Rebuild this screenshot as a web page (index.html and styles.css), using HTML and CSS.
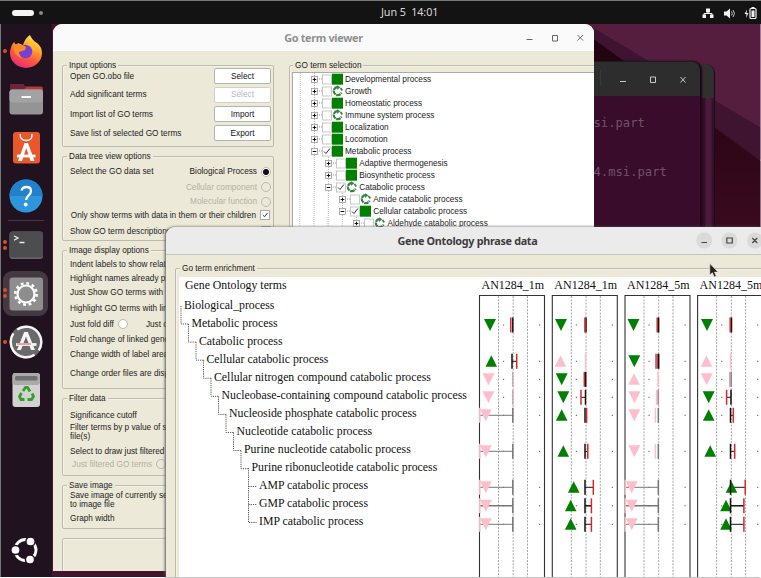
FILE: index.html
```html
<!DOCTYPE html>
<html lang="en">
<head>
<meta charset="utf-8">
<title>Gene Ontology phrase data</title>
<link rel="stylesheet" href="styles.css">
</head>
<body>
<svg class="wallpaper" viewBox="0 0 761 578">
  <defs><linearGradient id="shade" x1="0" y1="0" x2="0" y2="1"><stop offset="0" stop-color="#20030f"/><stop offset="1" stop-color="#3b0a1e"/></linearGradient></defs>
  <rect width="761" height="578" fill="#43142f"/>
  <path d="M590 26L761 128V24H590z" fill="#551e3e"/>
  <path d="M590 26L761 128V160L590 51z" fill="#3e1430"/>
  <path d="M590 36L761 161V240H590z" fill="url(#shade)"/>
</svg>

<header class="topbar">
  <div class="spaces"><i class="pill"></i><i class="dot"></i></div>
  <span class="clock">Jun 5&nbsp; 14:01</span>
  <svg class="tray" viewBox="700 4 58 16" fill="#f2f2f2">
    <path d="M706 7.500h4v4h-4zM702.500 13.500h3.500v3.500h-3.500zM710 13.500h3.500v3.500H710z"/><path d="M708 11v1.500M704 14v-1.500h8V14" fill="none" stroke="#f2f2f2"/>
    <path d="M724 10.500h2.500l3.500-3v10l-3.500-3H724z"/><path d="M731.500 10.500q1.500 2 0 4M733 9q3 3.500 0 7" fill="none" stroke="#ddd" stroke-width=".9"/>
    <path d="M747 8.500l-2.500 4.500h2l-.5 4 2.500-5h-2z"/><rect x="750" y="7.500" width="6" height="10" rx="1" fill="none" stroke="#f2f2f2" stroke-width="1.200"/><path d="M751.500 6h3v2h-3zM751.500 9.500h3v6.500h-3z"/>
  </svg>
</header>

<nav class="dock">
  <div class="slot one"><svg viewBox="0 0 34 34">
    <defs><linearGradient id="fox" x1=".8" y1="0" x2=".3" y2="1"><stop offset="0" stop-color="#fff44f"/><stop offset=".35" stop-color="#ffa72c"/><stop offset=".65" stop-color="#ff5a3c"/><stop offset="1" stop-color="#e62a78"/></linearGradient></defs>
    <path d="M21 1q2 5 7 8 5 4 5 10a16 15 0 0 1-32 0Q1 13 5 8l2 3 2-2 5 2q2-7 7-10z" fill="url(#fox)"/>
    <circle cx="16.500" cy="17.500" r="6.800" fill="#7540d6"/><path d="M4 11q6-3 13 2l-1 3-6 2q0 4 4 6-7-1-9-7z" fill="#ff8a25"/><path d="M18 11q6 0 7 7 2-6-3-10z" fill="#ffc02e"/></svg></div>
  <div class="slot"><svg viewBox="0 0 34 34">
    <path d="M1 4q0-2 2-2h11l2 2.500h16q2 0 2 2V14H1z" fill="#b43a35"/><path d="M1 4q0-2 2-2h11l2 2.500H18L14 8H1z" fill="#6c2439"/>
    <rect x=".5" y="7.500" width="33.500" height="25" rx="3" fill="#949494"/><rect x=".5" y="7.500" width="33.500" height="13" rx="3" fill="#a2a2a2"/><path d="M12.500 15h9.500" stroke="#fff" stroke-width="2"/></svg></div>
  <div class="slot"><svg viewBox="0 0 34 34">
    <rect x="4" y="1" width="27" height="31.500" rx="3" fill="#e9572b"/><path d="M11 3q0 6.500 6.200 6.500T23 3" fill="none" stroke="#fff" stroke-width="1.400"/>
    <path d="M15.500 12h3.500l6.500 18h-4l-4.200-13L13 30H9z" fill="#fff"/><path d="M8 25h18.500" stroke="#fff" stroke-width="2.800"/></svg></div>
  <div class="slot"><svg viewBox="0 0 34 34">
    <circle cx="17" cy="17" r="16.500" fill="#3096dc"/><path d="M.5 17a16.500 16.500 0 0 1 33 0z" fill="#2182cb"/><path d="M12.500 11.500q1-3.500 5-3.500 4.500 0 4.500 4 0 2-2.500 4.500T17 21" fill="none" stroke="#fff" stroke-width="2.300"/><circle cx="16.700" cy="25.500" r="1.900" fill="#fff"/></svg></div>
  <hr>
  <div class="slot two"><svg viewBox="0 0 34 34">
    <rect x=".5" y="3.500" width="33.500" height="27.500" rx="3" fill="#686868"/><rect x=".5" y="3.500" width="33.500" height="26" rx="3" fill="#4b4d4e"/><path d="M5 8l4 2-4 2.300M10.500 14.500h5" fill="none" stroke="#eee" stroke-width="1.300"/></svg></div>
  <div class="slot two active"><svg viewBox="0 0 34 34">
    <rect x=".5" y=".5" width="33.500" height="33" rx="3" fill="#8e8e8e"/><circle cx="17" cy="17" r="10.700" fill="none" stroke="#fff" stroke-width="2.600" stroke-dasharray="2.800 2.802"/><circle cx="17" cy="17" r="8.500" fill="none" stroke="#fff" stroke-width="2.200"/></svg></div>
  <div class="slot one"><svg viewBox="0 0 34 34">
    <circle cx="17" cy="17" r="16.500" fill="#6a6a6a"/><circle cx="17" cy="17" r="15.300" fill="none" stroke="#f5f5f5" stroke-width="2.400" stroke-dasharray="42 6.070" transform="rotate(-125 17 17)"/>
    <path d="M15.200 7h3.600L26 25h-4l-5-13.500L12 25H8z" fill="#f5f5f5"/><path d="M7 19.500h20.500" stroke="#f5f5f5" stroke-width="2.800"/><path d="M8 19h14" stroke="#d95a4a"/></svg></div>
  <div class="slot"><svg viewBox="0 0 34 34">
    <rect x="3.500" y="0" width="27.500" height="34" rx="3" fill="#d2d2d2"/><rect x="3.500" y="0" width="27.500" height="12" rx="3" fill="#aaa"/><rect x="6" y="3" width="22.500" height="4.500" rx="1.500" fill="#717171"/>
    <g fill="none" stroke="#34a02c" stroke-width="2.800"><path d="M14 18l2.500-3.500h2l2.500 4"/><path d="M23 20.500l1.500 3-2 3H18.500"/><path d="M15.500 26.500H12l-1.500-3 2-3.500"/></g></svg></div>
  <div class="slot launcher"><svg viewBox="0 0 34 34">
    <circle cx="17.500" cy="17" r="10.500" fill="none" stroke="#fff" stroke-width="2.800"/><g fill="#fff" stroke="#20121f" stroke-width="1.500"><circle cx="7.500" cy="17" r="4.600"/><circle cx="22.500" cy="8.500" r="4.600"/><circle cx="22" cy="26.500" r="4.600"/></g></svg></div>
</nav>

<section class="term term-back"><div class="term-bar"></div></section>
<section class="term term-front">
  <div class="term-bar"><svg viewBox="600 61 100 35" fill="none" stroke="#c8c8c8"><path d="M600 69v16" stroke="#444"/><path d="M620 80.500h6M650.500 76h5v5.500h-5zM680.500 76l5 5.500M685.500 76l-5 5.500"/></svg></div>
  <p>si.part</p><p>4.msi.part</p>
</section>

<main class="window viewer">
  <div class="titlebar"><h1>Go term viewer</h1>
    <svg viewBox="524 24 70 27" fill="none" stroke="#666"><path d="M526.500 39.500h6M552.500 35.500h5v5.500h-5zM577.500 35l5.500 5.500M583 35l-5.500 5.500"/></svg></div>
  <div class="body">
    <div class="options">
      <fieldset class="box input"><legend>Input options</legend>
        <div class="row"><span>Open GO.obo file</span><button>Select</button></div>
        <div class="row"><span>Add significant terms</span><button disabled>Select</button></div>
        <div class="row"><span>Import list of GO terms</span><button>Import</button></div>
        <div class="row"><span>Save list of selected GO terms</span><button>Export</button></div>
      </fieldset>
      <fieldset class="box data"><legend>Data tree view options</legend>
        <div class="row"><span>Select the GO data set</span><label>Biological Process<i class="radio on"></i></label></div>
        <div class="row end off"><label>Cellular component<i class="radio"></i></label></div>
        <div class="row end off"><label>Molecular function<i class="radio"></i></label></div>
        <div class="row end"><label>Only show terms with data in them or their children<svg class="check" viewBox="0 0 9 9"><path d="M2 4.500l2 2 3.500-4.500"/></svg></label></div>
        <div class="row"><span>Show GO term descriptions</span><svg class="check" viewBox="0 0 9 9"></svg></div>
      </fieldset>
      <fieldset class="box image"><legend>Image display options</legend>
        <div class="row"><span>Indent labels to show relation</span></div>
        <div class="row"><span>Highlight names already pre</span></div>
        <div class="row"><span>Just Show GO terms with</span></div>
        <div class="row"><span>Highlight GO terms with link</span></div>
        <div class="row fold"><span>Just fold diff</span><i class="radio"></i><span class="second">Just c</span></div>
        <div class="row"><span>Fold change of linked genes</span></div>
        <div class="row"><span>Change width of label area</span></div>
        <div class="row"><span>Change order files are displ</span></div>
      </fieldset>
      <fieldset class="box filter"><legend>Filter data</legend>
        <div class="row"><span>Significance cutoff</span></div>
        <div class="row"><span>Filter terms by p value of se<br>file(s)</span></div>
        <div class="row"><span>Select to draw just filtered g</span></div>
        <div class="row off just"><span>Just filtered GO terms</span><i class="radio"></i></div>
      </fieldset>
      <fieldset class="box save"><legend>Save image</legend>
        <div class="row"><span>Save image of currently sel<br>to image file</span></div>
        <div class="row"><span>Graph width</span></div>
      </fieldset>
      <div class="box rest"></div>
    </div>
    <fieldset class="box selection"><legend>GO term selection</legend>
      <ul class="tree">
        <li class="l1 shut sq">Developmental process</li>
        <li class="l1 shut cy">Growth</li>
        <li class="l1 shut sq">Homeostatic process</li>
        <li class="l1 shut cy">Immune system process</li>
        <li class="l1 shut sq">Localization</li>
        <li class="l1 shut sq">Locomotion</li>
        <li class="l1 open sq">Metabolic process</li>
        <li class="l2 shut sq">Adaptive thermogenesis</li>
        <li class="l2 shut sq">Biosynthetic process</li>
        <li class="l2 open cy">Catabolic process</li>
        <li class="l3 shut cy">Amide catabolic process</li>
        <li class="l3 open sq">Cellular catabolic process</li>
        <li class="l4 shut cy">Aldehyde catabolic process</li>
      </ul>
    </fieldset>
  </div>
</main>

<section class="window phrase">
  <div class="titlebar"><h1>Gene Ontology phrase data</h1>
    <svg viewBox="691 227 70 27" fill="none" stroke="#444"><g fill="#dadada" stroke="none"><circle cx="704.200" cy="240.500" r="8"/><circle cx="729.500" cy="240.500" r="8"/><circle cx="755" cy="240.500" r="8"/></g><path d="M701.500 242.500h5.500M726.800 238h5.500v5h-5.500zM752.300 238l5 5M757.300 238l-5 5" stroke-width="1.200"/></svg></div>
  <fieldset class="box enrich"><legend>Go term enrichment</legend>
    <div class="paper">
      <div class="terms">
        <h2>Gene Ontology terms</h2>
        <ol>
          <li>Biological_process</li><li>Metabolic process</li><li>Catabolic process</li><li>Cellular catabolic process</li><li>Cellular nitrogen compound catabolic process</li><li>Nucleobase-containing compound catabolic process</li><li>Nucleoside phosphate catabolic process</li><li>Nucleotide catabolic process</li><li>Purine nucleotide catabolic process</li><li>Purine ribonucleotide catabolic process</li><li>AMP catabolic process</li><li>GMP catabolic process</li><li>IMP catabolic process</li>
        </ol>
      </div>
      <svg class="chart" viewBox="478 277 283 300"></svg>
    </div>
  </fieldset>
</section>
<svg class="pointer" viewBox="0 0 10 15"><path d="M.8.500v11.500l2.600-2.300L5.200 14l2-.9-1.700-4h3.600z" fill="#222" stroke="#eee" stroke-width=".6"/></svg>
<script src="chart.js"></script>
</body>
</html>
```
FILE: styles.css
```css
* { box-sizing: border-box; }
html, body { margin: 0; width: 761px; height: 578px; overflow: hidden; }
body { position: relative; font-family: "Liberation Sans", sans-serif; font-size: 8.250px; line-height: 9px; color: #1c1c1c; background: #fff; white-space: nowrap; }
svg { display: block; flex: none; }
p, h1, h2, ul, ol { margin: 0; padding: 0; list-style: none; }
.wallpaper { position: absolute; left: 0; top: 0; width: 761px; height: 577px; }

.topbar { position: absolute; left: 0; top: 0; width: 761px; height: 24px; background: #131313; border-top: 1px solid #777; display: grid; grid-template-columns: 369px 60px 1fr; align-items: center; padding: 0 3px 0 12px; }
.spaces { display: flex; align-items: center; gap: 5px; }
.pill { width: 22px; height: 6px; border-radius: 3px; background: #f4f4f4; }
.dot { width: 4px; height: 4px; border-radius: 50%; background: #888; }
.clock { font: 10.800px/16px "Noto Sans", sans-serif; letter-spacing: -.1px; color: #d8d8d8; padding-bottom: 1px; }
.tray { width: 58px; height: 16px; justify-self: end; }

.dock { position: absolute; left: 0; top: 24px; width: 53px; height: 553px; background: #20121f; border-left: 1px solid #777; border-right: 1px solid #4a1734; padding-top: 3px; display: flex; flex-direction: column; }
.dock hr { width: 36px; height: 1px; border: 0; background: #453743; margin: 0 0 0 7px; flex: none; }
.slot { height: 48.300px; flex: none; position: relative; display: flex; align-items: center; padding-left: 7.500px; }
.slot svg { width: 34px; height: 34px; position: relative; }
.slot.one::before, .slot.two::before { content: ""; position: absolute; left: 2px; top: 22px; width: 4px; height: 4px; border-radius: 50%; background: #d84f2a; z-index: 2; }
.slot.two::before { top: 19px; box-shadow: 0 6px #d84f2a; }
.slot.active::after { content: ""; position: absolute; left: 2px; top: 1.500px; width: 45px; height: 45px; border-radius: 9px; background: #443943; }
.slot.active svg { z-index: 1; }
.dock .launcher { margin: auto 0 3px -1px; }

.term { position: absolute; background: #380c2a; border-radius: 9px 9px 0 0; overflow: hidden; }
.term-back { left: 560px; top: 64px; width: 155px; height: 170px; border-right: 1px solid #220718; background: linear-gradient(90deg, #380c2a 145px, #4b1b3c 146px, #4b1b3c 151px, #35102b 152px); }
.term-back .term-bar { height: 34px; background: #303030; }
.term-front { left: 560px; top: 61px; width: 141px; height: 180px; border-right: 1px solid #1a0613; border-top: 1px solid #1c1c1c; font: 12.200px/20px "DejaVu Sans Mono", monospace; color: #70536a; box-shadow: 1px 0 2px #1a0613; }
.term-front .term-bar { height: 34px; background: #2d2d2d; margin-bottom: 17px; }
.term-front svg { width: 100px; height: 35px; margin-left: 40px; }
.term-front p { padding-left: 33.500px; height: 49px; }

.window { position: absolute; overflow: hidden; background: #ece9d8; }
.viewer { left: 53px; top: 24px; width: 541px; height: 547px; border-radius: 9px 9px 0 0; }
.titlebar { height: 27px; display: flex; justify-content: flex-end; background: #fafafa; }
.titlebar svg { width: 70px; height: 27px; }
h1 { flex: 1; text-align: center; font: bold 10.800px/27px "Noto Sans", sans-serif; letter-spacing: -.3px; color: #909090; }
.viewer h1 { padding-left: 70px; }
.viewer .body { display: flex; gap: 15px; padding: 14px 0 0 9px; }
.options { width: 212px; flex: none; display: flex; flex-direction: column; gap: 9px; }
.box { margin: 0; padding: 0 3px 0 7px; min-width: 0; border: 1px solid #bdbbae; border-radius: 2px; display: grid; align-content: start; box-shadow: inset 1px 1px #f5f3e8; position: relative; }
.box > legend { position: absolute; left: 4px; top: -6px; padding: 0 2px; height: 11px; line-height: 11px; background: #ece9d8; }
.row { display: flex; align-items: center; justify-content: space-between; }
.row.end { justify-content: flex-end; }
.off { color: #b3b1a5; }
.row label { display: flex; align-items: center; gap: 4px; }
.input { height: 82px; padding-right: 2px; grid-template-rows: 20px 17px 22px 16px; }
.data { height: 85px; padding-top: 7px; padding-right: 2px; grid-template-rows: 15px 16px 13px 14px 18px; }
.row.end:not(.off) label { margin-right: 1px; }
.image { height: 139px; padding-top: 6px; grid-template-rows: 14px 15px 13px 19px 12px 18px 12px 27px; }
.filter { height: 78px; padding-top: 10px; grid-template-rows: 13px 20px 19px 6px; }
.save { height: 44px; padding-top: 4px; grid-template-rows: 20px 16px; }
.rest { height: 50px; }
.row.fold, .row.just { justify-content: flex-start; gap: 4px; }
.row.just { padding-left: 2px; }
.second { margin-left: 14px; }
button { width: 57px; height: 16px; padding: 0; border: 1px solid #b5b4ab; border-radius: 2px; background: #fff; color: #111; font: inherit; }
button:disabled { color: #b8b8b8; border-color: #d2d0c5; }
.radio { width: 10px; height: 10px; border: 1px solid #bbb9ae; border-radius: 50%; background: #fff; }
.off .radio { background: #ece9d8; }
.radio.on { background: radial-gradient(circle, #111 2.700px, #fff 3.300px); }
.check { width: 10px; height: 10px; border: 1px solid #aaa; background: #fff; fill: none; stroke: #333; stroke-width: 1.100; }

.selection { width: 330px; height: 500px; padding: 6px 0 0 2px; flex: none; }
.selection.box > legend { left: 3px; }
.tree { height: 490px; background: #fff; border: 1px solid #aaa; }
.tree li { height: 12px; display: flex; align-items: center; gap: 4px; }
.tree li svg { width: 31px; height: 12px; overflow: visible; }
.l1 { padding-left: 17px; } .l2 { padding-left: 31.200px; } .l3 { padding-left: 45.200px; } .l4 { padding-left: 59.400px; }

.phrase { left: 166px; top: 227px; width: 595px; height: 350px; border-radius: 9px 0 0 0; box-shadow: -1px 0 3px #555; }
.phrase .titlebar { background: #ebebeb; border-bottom: 1px solid #c5c5c0; height: 28px; }
.phrase h1 { color: #3d3d3d; padding-left: 78px; }
.enrich { margin: 13px 0 0 9px; padding: 8px 0 0 3px; width: 620px; height: 340px; }
.paper { background: #fff; display: flex; width: 582px; height: 300px; }
.terms { width: 299px; font: 11.800px/18px "Liberation Serif", serif; color: #111; }
.terms h2 { font: inherit; line-height: 17px; padding: 0 0 0 6px; height: 18.600px; }
.terms li { height: 18.050px; }
.chart { width: 283px; height: 300px; overflow: visible; }
.chart text { font: 12px "Liberation Serif", serif; fill: #111; }
.terms li:nth-child(1) { padding-left: 5px; } .terms li:nth-child(2) { padding-left: 12.500px; }
.terms li:nth-child(3) { padding-left: 20px; } .terms li:nth-child(4) { padding-left: 27.500px; }
.terms li:nth-child(5) { padding-left: 35px; } .terms li:nth-child(6) { padding-left: 42.500px; }
.terms li:nth-child(7) { padding-left: 50px; } .terms li:nth-child(8) { padding-left: 57.500px; }
.terms li:nth-child(9) { padding-left: 65px; } .terms li:nth-child(10) { padding-left: 72.500px; }
.terms li:nth-child(n+11) { padding-left: 80px; }
.pointer { position: absolute; left: 709px; top: 263px; width: 10px; height: 15px; }
```
FILE: chart.js
```js
// Expander, checkbox and marker in front of each tree row.
document.querySelectorAll('.tree li').forEach(function (li) {
  var open = li.classList.contains('open');
  var level = +li.className.charAt(1);
  var guides = '';
  for (var i = 0; i <= level; i++) {
    guides += '<path d="M' + (4.5 - 14.2 * i) + ' 0v12" stroke="#aaa" stroke-width=".8" stroke-dasharray="1 1"/>';
  }
  var mark = li.classList.contains('sq')
    ? '<rect x="22" y=".7" width="11" height="11" fill="#008000"/>'
    : '<path d="M27.500 2.200a4 4 0 1 0 4 5.500" fill="none" stroke="#3c7f47" stroke-width="2.200" stroke-dasharray="4.500 .7"/><path d="M27 .2l3.500 2-3.500 2.500z" fill="#3c7f47"/><path d="M30.500 3l1.800 2.500" stroke="#3c7f47" stroke-width="1.800"/>';
  li.insertAdjacentHTML('afterbegin',
    '<svg viewBox="0 0 31 12">' + guides +
    '<path d="M7 6h5" stroke="#999" stroke-dasharray="1 1"/>' +
    '<rect x="1.500" y="3.500" width="6" height="6" fill="#fff" stroke="#999" stroke-width=".8"/>' +
    '<path d="M2.700 6.500h3.600' + (open ? '' : 'M4.500 4.700v3.600') + '" stroke="#111"/>' +
    '<rect x="12.500" y="2" width="9" height="9" fill="#fff" stroke="#bbb" stroke-width=".8"/>' +
    (open ? '<path d="M14 6.500l2 2 3.800-5" fill="none" stroke="#333"/>' : '') + mark + '</svg>');
});

// Plot columns: [row, direction, colour, marker x, bars, joined].
var G = '#008000', P = '#ffbecb', R = '#d92727', K = '#111', D = '#777', M = '#cda5b5';
var Y = { 2: 325, 4: 361.3, 5: 379.3, 6: 397.3, 7: 415.3, 9: 451.3, 11: 487.3, 12: 505.8, 13: 524.3 };
var columns = [
  { x: 479.5, name: 'AN1284_1m', rows: [[2, 'd', G, 490, [[510.8, R], [512.8, K]]], [4, 'u', G, 491.3, [[512, K], [516.7, R]], 1], [5, 'd', P, 488.5, [[512.7, M]]], [6, 'd', P, 488.5, [[512.7, M]]]]
    .concat([7, 9, 11, 12, 13].map(function (r) { return [r, 'd', P, 485.8, [[479.8, P], [512.8, D]], 1]; })) },
  { x: 552.3, name: 'AN1284_1m', rows: [[2, 'd', G, 561, [[586, K], [584.9, R]]], [4, 'u', P, 560.5, [[585.5, P]]], [5, 'd', G, 561.7, [[584.3, R], [585.7, K]]], [6, 'd', G, 563.3, [[581, R], [585.5, K]], 1], [7, 'u', G, 561.7, [[585, K], [586.6, R]]], [9, 'u', G, 563.3, [[585, K], [587.8, R]], 1], [11, 'u', G, 573.7, [[585, K], [593.3, R]], 1], [12, 'u', G, 570.7, [[585, K], [591.4, R]], 1], [13, 'u', G, 570.7, [[585, K], [591.4, R]], 1]] },
  { x: 625, name: 'AN1284_5m', rows: [[2, 'd', G, 633.5, [[657.2, R], [658.6, K]]], [4, 'd', G, 634.3, [[656, '#c54550'], [657.3, '#c54550'], [658.7, K]]], [5, 'u', P, 634, [[658, P]]], [6, 'd', P, 634.5, [[656.5, P], [658.2, '#a78392']]], [7, 'd', P, 634.3, [[655.4, P], [658.3, D]]], [9, 'd', P, 634.3, [[655.4, P], [658.3, D]]]]
    .concat([11, 12, 13].map(function (r) { return [r, 'd', P, 631.7, [[625.2, P], [658.3, D]], 1]; })) },
  { x: 697.6, name: 'AN1284_5m', rows: [[2, 'd', G, 707, [[731.5, K], [730.2, R]]], [4, 'u', P, 706.5, [[730.5, P]]], [5, 'd', P, 706.7, [[729.8, M], [731.2, '#968090']]], [6, 'd', G, 708.7, [[726.6, R], [731, K]], 1], [7, 'u', G, 708.7, [[730.5, K], [733.3, R]], 1], [9, 'u', G, 710.2, [[730.5, K], [734.7, R]], 1], [11, 'u', G, 731.5, [[730.5, K], [745.2, R]], 1], [12, 'u', G, 726, [[730.5, K], [743.9, R]], 1], [13, 'u', G, 726, [[730.5, K], [743.9, R]], 1]] }
];
var out = '';
columns.forEach(function (c) {
  out += '<text x="' + (c.x + 2) + '" y="289">' + c.name + '</text>';
  [19, 33.7, 48].forEach(function (g) { out += '<path d="M' + (c.x + g) + ' 296V577" stroke="#999" stroke-width=".9" stroke-dasharray="2 1.300"/>'; });
  out += '<path d="M' + c.x + ' 577V295.500h65V577" fill="none" stroke="#333" stroke-width="1.100"/>';
  c.rows.forEach(function (r) {
    var y = Y[r[0]], x = r[3], b = r[4];
    out += '<path d="M' + (c.x + 23.5) + ' ' + y + 'h1.200M' + (c.x + 59.500) + ' ' + y + 'h1.200" stroke="#555" stroke-width="1"/>';
    if (r[5]) out += '<path d="M' + b[0][0] + ' ' + y + 'H' + b[1][0] + '" stroke="' + (b[1][1] === D ? D : K) + '" stroke-width="' + (r[0] === 12 ? 1.5 : 1) + '"/>';
    out += r[1] === 'u'
      ? '<path d="M' + (x - 5.8) + ' ' + (y + 5.5) + 'h11.600l-5.800-11.500z" fill="' + r[2] + '"/>'
      : '<path d="M' + (x - 6) + ' ' + (y - 6) + 'h12l-6 12z" fill="' + r[2] + '"/>';
    b.forEach(function (k) { out += '<path d="M' + k[0] + ' ' + (y - 7.5) + 'v15" stroke="' + k[1] + '" stroke-width="1.500"/>'; });
  });
});
// Dotted connectors between the indented term labels.
for (var i = 0; i < 9; i++) {
  var x = 181 + 7.5 * i, y = 306 + 18.08 * i;
  out += '<path d="M' + x + ' ' + y + 'v18h7.500" fill="none" stroke="#555" stroke-dasharray="1.200 1"/>';
}
out += '<path d="M248.500 468v54.500h8M248.500 486.500h8M248.500 504.500h8" fill="none" stroke="#555" stroke-dasharray="1.200 1"/>';
document.querySelector('.chart').innerHTML = out;
```
